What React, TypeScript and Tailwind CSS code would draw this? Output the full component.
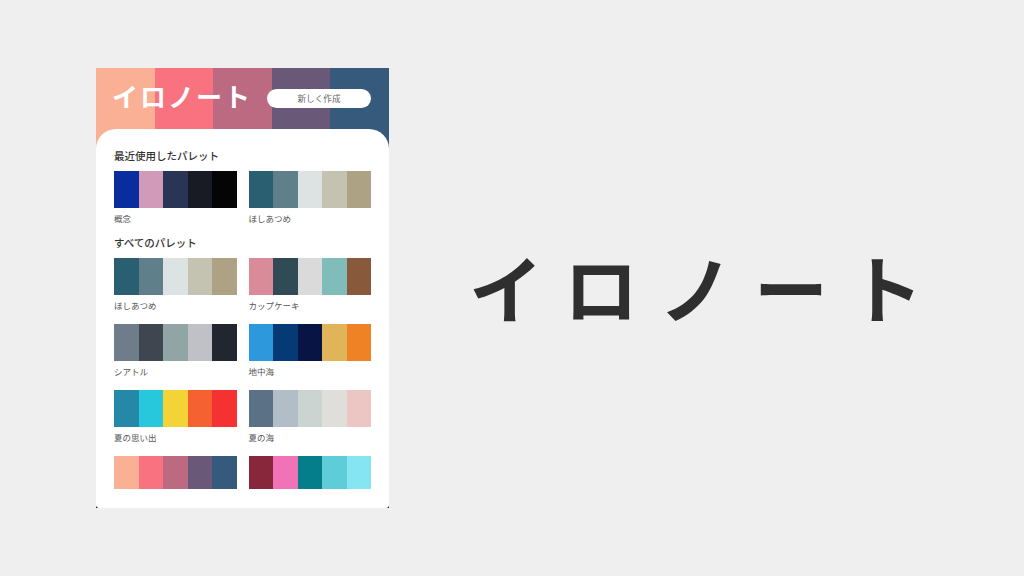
const headerColors = ['#fab095', '#f97280', '#bc6a82', '#6a5879', '#355a7c']

type Palette = { name?: string; colors: string[] }

const recent: Palette[] = [
  { name: '概念', colors: ['#0a2d9e', '#d09ab8', '#2a3556', '#191b24', '#050506'] },
  { name: 'ほしあつめ', colors: ['#2a5f72', '#5f7f8a', '#dde3e3', '#c4c3b2', '#ada283'] },
]

const all: Palette[] = [
  { name: 'ほしあつめ', colors: ['#2a5f72', '#5f7f8a', '#dde3e3', '#c4c3b2', '#ada283'] },
  { name: 'カップケーキ', colors: ['#da8b9a', '#304b56', '#dadada', '#7fbcba', '#885a3b'] },
  { name: 'シアトル', colors: ['#6f7d8a', '#40464f', '#91a5a5', '#bfc1c6', '#22262e'] },
  { name: '地中海', colors: ['#2e98dd', '#053a75', '#081443', '#e0b55a', '#ee8225'] },
  { name: '夏の思い出', colors: ['#2389a6', '#27c7dc', '#f3d337', '#f56131', '#f53131'] },
  { name: '夏の海', colors: ['#5b7186', '#b1bdc7', '#cbd4d1', '#e0dedb', '#ebc6c3'] },
  { colors: ['#fab095', '#f97280', '#bc6a82', '#6a5879', '#355a7c'] },
  { colors: ['#88273c', '#f272b8', '#047e8b', '#5fcdd9', '#86e5f3'] },
]

function PaletteCard({ palette }: { palette: Palette }) {
  return (
    <div>
      {/* the last row has no name and is cut a little shorter */}
      <div className={palette.name ? 'flex h-[37px]' : 'flex h-[33px]'}>
        {palette.colors.map((c, i) => (
          <div key={i} className="flex-1" style={{ backgroundColor: c }} />
        ))}
      </div>
      {palette.name && (
        <p className="mt-[4px] h-[13px] text-[8.5px] leading-[12px] text-[#555]">{palette.name}</p>
      )}
    </div>
  )
}

export default function App() {
  return (
    <div
      className="flex h-screen items-center bg-[#efefef]"
      style={{ fontFamily: '"Noto Sans CJK JP", sans-serif' }}
    >
      <div className="relative ml-[96px] h-[440px] w-[293px] shrink-0 overflow-hidden bg-black">
        <div className="flex h-[90px]">
          {headerColors.map((c) => (
            <div key={c} className="flex-1" style={{ backgroundColor: c }} />
          ))}
        </div>

        <div className="relative -mt-[29px] h-[379px] rounded-t-[20px] rounded-b-[3px] bg-white px-[18px] pt-[19px]">
          <h2 className="h-[15px] text-[10.5px] font-medium leading-[15px] text-[#333]">最近使用したパレット</h2>
          <div className="mt-[8px] grid grid-cols-2 gap-x-[12px]">
            {recent.map((p) => (
              <PaletteCard key={p.name} palette={p} />
            ))}
          </div>
          <h2 className="mt-[10px] h-[15px] text-[10.5px] font-medium leading-[15px] text-[#333]">すべてのパレット</h2>
          <div className="mt-[8px] grid grid-cols-2 gap-x-[12px] gap-y-[12px]">
            {all.map((p, i) => (
              <PaletteCard key={i} palette={p} />
            ))}
          </div>
        </div>

        <div className="absolute left-0 right-0 top-0 flex h-[61px] items-center justify-between pl-[16px] pr-[18px]">
          <h1 className="pb-[6px] text-[26px] font-bold leading-none tracking-[2px] text-white">イロノート</h1>
          <button className="h-[19px] w-[104px] rounded-full bg-white text-[8.6px] leading-[19px] text-[#666]">
            新しく作成
          </button>
        </div>
      </div>

      <p className="ml-[80px] whitespace-nowrap pb-[4px] text-[74px] font-bold leading-none tracking-[21px] text-[#2f2f2f]">
        イロノート
      </p>
    </div>
  )
}
